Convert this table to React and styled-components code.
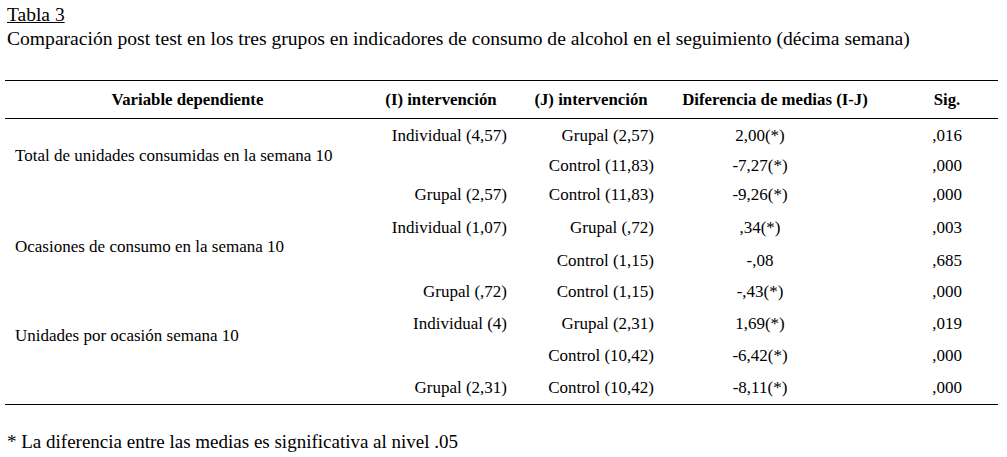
import React from 'react'
import styled, { createGlobalStyle } from 'styled-components'

// --------------- Basic Styling -------------------
const GlobalStyle = createGlobalStyle`
    body {
        margin: 0;
        background: #fff;
        color: #000;
        font-family: "Liberation Serif", "Times New Roman", serif;
    }
`

const Page = styled.div`
    width: 1007px;
    height: 457px;
    padding: 3px 0 0 7px;
    box-sizing: border-box;
`

const Title = styled.div`
    font-size: 19.5px;
    line-height: 24px;
    span {
        text-decoration: underline;
    }
`

const Caption = styled.div`
    font-size: 19.6px;
    line-height: 24px;
`

const Table = styled.div`
    margin: 29px 0 0 -2px;
    width: 993px;
    display: grid;
    grid-template-columns: 365px 142px 148px 200px 138px;
    border-top: 1px solid #000;
    border-bottom: 1px solid #000;
    font-size: 17px;
`

const HeadCell = styled.div`
    height: 37px;
    display: flex;
    align-items: center;
    justify-content: center;
    font-weight: bold;
    font-size: 16.8px;
    border-bottom: 1px solid #000;
    padding: ${p => p.$pad || '0'};
    white-space: nowrap;
`

const Cell = styled.div`
    display: flex;
    align-items: center;
    justify-content: ${p => p.$align || 'center'};
    height: ${p => p.$h}px;
    padding: ${p => p.$pad || '0'};
    white-space: nowrap;
`

const VarCell = styled.div`
    grid-row: span ${p => p.$span};
    display: flex;
    align-items: center;
    padding: ${p => p.$top}px 0 ${p => p.$bottom}px 10px;
    box-sizing: border-box;
    white-space: nowrap;
`

const Footnote = styled.div`
    margin-top: 26px;
    font-size: 19px;
`

//--------------- data --------------
const groups = [
    {
        label: 'Total de unidades consumidas en la semana 10',
        top: 14,
        bottom: 0,
        rows: [
            { h: 34, i: 'Individual (4,57)', j: 'Grupal (2,57)', d: '2,00(*)', s: ',016' },
            { h: 26, i: '', j: 'Control (11,83)', d: '-7,27(*)', s: ',000' },
            { h: 31, i: 'Grupal (2,57)', j: 'Control (11,83)', d: '-9,26(*)', s: ',000', last: true },
        ],
    },
    {
        label: 'Ocasiones de consumo en la semana 10',
        top: 6,
        bottom: 0,
        rows: [
            { h: 35, i: 'Individual (1,07)', j: 'Grupal (,72)', d: ',34(*)', s: ',003' },
            { h: 32, i: '', j: 'Control (1,15)', d: '-,08', s: ',685' },
            { h: 30, i: 'Grupal (,72)', j: 'Control (1,15)', d: '-,43(*)', s: ',000', last: true },
        ],
    },
    {
        label: 'Unidades por ocasión semana 10',
        top: 0,
        bottom: 8,
        rows: [
            { h: 33, i: 'Individual (4)', j: 'Grupal (2,31)', d: '1,69(*)', s: ',019' },
            { h: 32, i: '', j: 'Control (10,42)', d: '-6,42(*)', s: ',000' },
            { h: 32, i: 'Grupal (2,31)', j: 'Control (10,42)', d: '-8,11(*)', s: ',000', last: true },
        ],
    },
]

const App = () => {
    return (
        <Page>
            <GlobalStyle />
            <Title><span>Tabla 3</span></Title>
            <Caption>
                Comparación post test en los tres grupos en indicadores de consumo de alcohol en el seguimiento (décima semana)
            </Caption>
            <Table>
                <HeadCell>Variable dependiente</HeadCell>
                <HeadCell>(I) intervención</HeadCell>
                <HeadCell $pad='0 0 0 10px'>(J) intervención</HeadCell>
                <HeadCell $pad='0 0 0 30px'>Diferencia de medias (I-J)</HeadCell>
                <HeadCell $pad='0 0 0 36px'>Sig.</HeadCell>
                {groups.map(g => (
                    <React.Fragment key={g.label}>
                        <VarCell $span={2} $top={g.top} $bottom={g.bottom}>{g.label}</VarCell>
                        {g.rows.map((r, idx) => (
                            <React.Fragment key={idx}>
                                {r.last && <Cell $h={r.h} />}
                                <Cell $h={r.h} $align='flex-end' $pad='0 5px 0 0'>{r.i}</Cell>
                                <Cell $h={r.h} $align='flex-end' $pad='0 6px 0 0'>{r.j}</Cell>
                                <Cell $h={r.h}>{r.d}</Cell>
                                <Cell $h={r.h} $pad='0 0 0 36px'>{r.s}</Cell>
                            </React.Fragment>
                        ))}
                    </React.Fragment>
                ))}
            </Table>
            <Footnote>* La diferencia entre las medias es significativa al nivel .05</Footnote>
        </Page>
    )
}

export default App
